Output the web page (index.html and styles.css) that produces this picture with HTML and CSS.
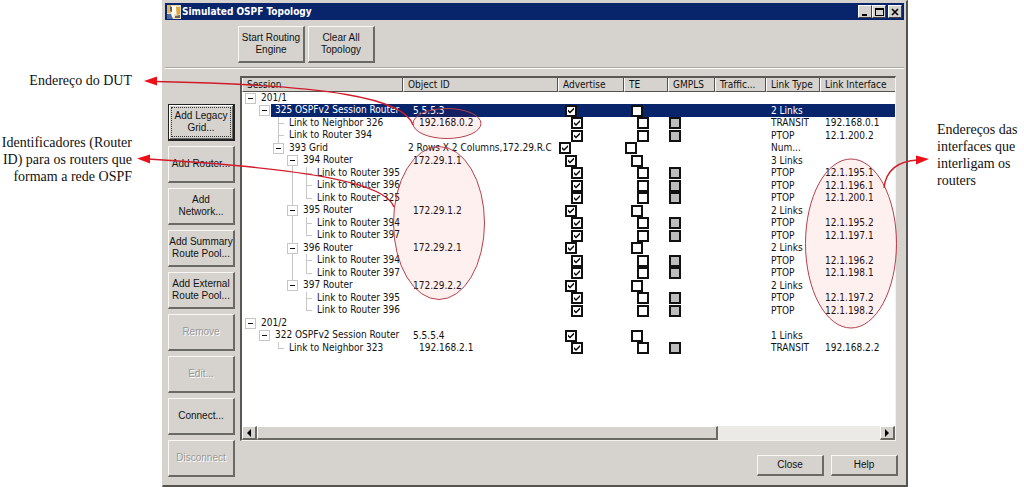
FILE: index.html
```html
<!DOCTYPE html>
<html lang="pt">
<head>
<meta charset="utf-8">
<title>Simulated OSPF Topology</title>
<link rel="stylesheet" href="styles.css">
</head>
<body>
<main class="figure">
  <aside class="notes notes-left">
    <p>Endereço do DUT</p>
    <p>Identificadores (Router<br>ID) para os routers que<br>formam a rede OSPF</p>
  </aside>

  <section class="window">
    <header class="titlebar">
      <svg class="app-icon" viewBox="0 0 14 14" aria-hidden="true">
        <rect width="14" height="14" fill="#e9dcc0"/>
        <path d="M0 0h4v8H0z" fill="#e0b86a"/><path d="M0 9h4l2 5H0z" fill="#4c6f9f"/>
        <path d="M4 1h5v8H7v3H5z" fill="#fffdf4"/><path d="M9 2h4v7l-3 1z" fill="#e3a62f"/>
        <path d="M3 1l2 1v5L3 6zM8 11l5-1v3H8z" fill="#6d6350"/>
      </svg>
      <h1>Simulated OSPF Topology</h1>
      <button class="caption" aria-label="Minimize"><svg viewBox="0 0 9 8"><path d="M1 6h5v2H1z"/></svg></button>
      <button class="caption" aria-label="Maximize"><svg viewBox="0 0 9 8"><path d="M0 0h9v8H0zM1 2v5h7V2z" fill-rule="evenodd"/></svg></button>
      <button class="caption caption-close" aria-label="Close window"><svg viewBox="0 0 9 8"><path d="M1 1l6 6M7 1L1 7" stroke="#000" stroke-width="1.6"/></svg></button>
    </header>

    <div class="toolbar">
      <button class="btn tall">Start Routing<br>Engine</button>
      <button class="btn tall">Clear All<br>Topology</button>
    </div>

    <div class="content">
      <nav class="actions">
        <button class="btn tall focused"><span>Add Legacy<br>Grid...</span></button>
        <button class="btn tall">Add Router...</button>
        <button class="btn tall">Add<br>Network...</button>
        <button class="btn tall">Add Summary<br>Route Pool...</button>
        <button class="btn tall">Add External<br>Route Pool...</button>
        <button class="btn tall" disabled>Remove</button>
        <button class="btn tall" disabled>Edit...</button>
        <button class="btn tall">Connect...</button>
        <button class="btn tall" disabled>Disconnect</button>
      </nav>

      <div class="pane">
        <div class="list">
          <table>
            <colgroup><col class="c-session"><col class="c-object"><col class="c-adv"><col class="c-te"><col class="c-gmpls"><col class="c-traffic"><col class="c-type"><col></colgroup>
            <thead><tr><th>Session</th><th>Object ID</th><th>Advertise</th><th>TE</th><th>GMPLS</th><th>Traffic...</th><th>Link Type</th><th>Link Interface</th></tr></thead>
            <tbody>
              <tr><td><div class="node"><button class="toggle" aria-label="Collapse 201/1"></button><b>201/1</b></div></td><td></td><td></td><td></td><td></td><td></td><td></td><td></td></tr>
              <tr class="router selected"><td><div class="node"><i></i><button class="toggle" aria-label="Collapse 325"></button><b>325 OSPFv2 Session Router</b></div></td><td>5.5.5.3</td><td><input type="checkbox" aria-label="Advertise" checked></td><td><input type="checkbox" aria-label="TE"></td><td></td><td></td><td>2 Links</td><td></td></tr>
              <tr class="link"><td><div class="node"><i></i><i></i><i class="tee"></i><b>Link to Neighbor 326</b></div></td><td>192.168.0.2</td><td><input type="checkbox" aria-label="Advertise" checked></td><td><input type="checkbox" aria-label="TE"></td><td><input type="checkbox" aria-label="GMPLS" disabled></td><td></td><td>TRANSIT</td><td>192.168.0.1</td></tr>
              <tr class="link"><td><div class="node"><i></i><i></i><i class="tee"></i><b>Link to Router 394</b></div></td><td></td><td><input type="checkbox" aria-label="Advertise" checked></td><td><input type="checkbox" aria-label="TE"></td><td><input type="checkbox" aria-label="GMPLS" disabled></td><td></td><td>PTOP</td><td>12.1.200.2</td></tr>
              <tr class="grid"><td><div class="node"><i></i><i></i><button class="toggle up" aria-label="Collapse 393"></button><b>393 Grid</b></div></td><td>2 Rows X 2 Columns,172.29.R.C</td><td><input type="checkbox" aria-label="Advertise" checked></td><td><input type="checkbox" aria-label="TE"></td><td></td><td></td><td>Num...</td><td></td></tr>
              <tr class="router"><td><div class="node"><i></i><i></i><i></i><button class="toggle down" aria-label="Collapse 394"></button><b>394 Router</b></div></td><td>172.29.1.1</td><td><input type="checkbox" aria-label="Advertise" checked></td><td><input type="checkbox" aria-label="TE"></td><td></td><td></td><td>3 Links</td><td></td></tr>
              <tr class="link"><td><div class="node"><i></i><i></i><i></i><i class="line"></i><i class="tee"></i><b>Link to Router 395</b></div></td><td></td><td><input type="checkbox" aria-label="Advertise" checked></td><td><input type="checkbox" aria-label="TE"></td><td><input type="checkbox" aria-label="GMPLS" disabled></td><td></td><td>PTOP</td><td>12.1.195.1</td></tr>
              <tr class="link"><td><div class="node"><i></i><i></i><i></i><i class="line"></i><i class="tee"></i><b>Link to Router 396</b></div></td><td></td><td><input type="checkbox" aria-label="Advertise" checked></td><td><input type="checkbox" aria-label="TE"></td><td><input type="checkbox" aria-label="GMPLS" disabled></td><td></td><td>PTOP</td><td>12.1.196.1</td></tr>
              <tr class="link"><td><div class="node"><i></i><i></i><i></i><i class="line"></i><i class="tee end"></i><b>Link to Router 325</b></div></td><td></td><td><input type="checkbox" aria-label="Advertise" checked></td><td><input type="checkbox" aria-label="TE"></td><td><input type="checkbox" aria-label="GMPLS" disabled></td><td></td><td>PTOP</td><td>12.1.200.1</td></tr>
              <tr class="router"><td><div class="node"><i></i><i></i><i></i><button class="toggle up down" aria-label="Collapse 395"></button><b>395 Router</b></div></td><td>172.29.1.2</td><td><input type="checkbox" aria-label="Advertise" checked></td><td><input type="checkbox" aria-label="TE"></td><td></td><td></td><td>2 Links</td><td></td></tr>
              <tr class="link"><td><div class="node"><i></i><i></i><i></i><i class="line"></i><i class="tee"></i><b>Link to Router 394</b></div></td><td></td><td><input type="checkbox" aria-label="Advertise" checked></td><td><input type="checkbox" aria-label="TE"></td><td><input type="checkbox" aria-label="GMPLS" disabled></td><td></td><td>PTOP</td><td>12.1.195.2</td></tr>
              <tr class="link"><td><div class="node"><i></i><i></i><i></i><i class="line"></i><i class="tee end"></i><b>Link to Router 397</b></div></td><td></td><td><input type="checkbox" aria-label="Advertise" checked></td><td><input type="checkbox" aria-label="TE"></td><td><input type="checkbox" aria-label="GMPLS" disabled></td><td></td><td>PTOP</td><td>12.1.197.1</td></tr>
              <tr class="router"><td><div class="node"><i></i><i></i><i></i><button class="toggle up down" aria-label="Collapse 396"></button><b>396 Router</b></div></td><td>172.29.2.1</td><td><input type="checkbox" aria-label="Advertise" checked></td><td><input type="checkbox" aria-label="TE"></td><td></td><td></td><td>2 Links</td><td></td></tr>
              <tr class="link"><td><div class="node"><i></i><i></i><i></i><i class="line"></i><i class="tee"></i><b>Link to Router 394</b></div></td><td></td><td><input type="checkbox" aria-label="Advertise" checked></td><td><input type="checkbox" aria-label="TE"></td><td><input type="checkbox" aria-label="GMPLS" disabled></td><td></td><td>PTOP</td><td>12.1.196.2</td></tr>
              <tr class="link"><td><div class="node"><i></i><i></i><i></i><i class="line"></i><i class="tee end"></i><b>Link to Router 397</b></div></td><td></td><td><input type="checkbox" aria-label="Advertise" checked></td><td><input type="checkbox" aria-label="TE"></td><td><input type="checkbox" aria-label="GMPLS" disabled></td><td></td><td>PTOP</td><td>12.1.198.1</td></tr>
              <tr class="router"><td><div class="node"><i></i><i></i><i></i><button class="toggle up" aria-label="Collapse 397"></button><b>397 Router</b></div></td><td>172.29.2.2</td><td><input type="checkbox" aria-label="Advertise" checked></td><td><input type="checkbox" aria-label="TE"></td><td></td><td></td><td>2 Links</td><td></td></tr>
              <tr class="link"><td><div class="node"><i></i><i></i><i></i><i></i><i class="tee"></i><b>Link to Router 395</b></div></td><td></td><td><input type="checkbox" aria-label="Advertise" checked></td><td><input type="checkbox" aria-label="TE"></td><td><input type="checkbox" aria-label="GMPLS" disabled></td><td></td><td>PTOP</td><td>12.1.197.2</td></tr>
              <tr class="link"><td><div class="node"><i></i><i></i><i></i><i></i><i class="tee end"></i><b>Link to Router 396</b></div></td><td></td><td><input type="checkbox" aria-label="Advertise" checked></td><td><input type="checkbox" aria-label="TE"></td><td><input type="checkbox" aria-label="GMPLS" disabled></td><td></td><td>PTOP</td><td>12.1.198.2</td></tr>
              <tr><td><div class="node"><button class="toggle" aria-label="Collapse 201/2"></button><b>201/2</b></div></td><td></td><td></td><td></td><td></td><td></td><td></td><td></td></tr>
              <tr class="router"><td><div class="node"><i></i><button class="toggle" aria-label="Collapse 322"></button><b>322 OSPFv2 Session Router</b></div></td><td>5.5.5.4</td><td><input type="checkbox" aria-label="Advertise" checked></td><td><input type="checkbox" aria-label="TE"></td><td></td><td></td><td>1 Links</td><td></td></tr>
              <tr class="link"><td><div class="node"><i></i><i></i><i class="tee end"></i><b>Link to Neighbor 323</b></div></td><td>192.168.2.1</td><td><input type="checkbox" aria-label="Advertise" checked></td><td><input type="checkbox" aria-label="TE"></td><td><input type="checkbox" aria-label="GMPLS" disabled></td><td></td><td>TRANSIT</td><td>192.168.2.2</td></tr>
            </tbody>
          </table>
          <div class="scrollbar">
            <button aria-label="Scroll left"><svg viewBox="0 0 4 8"><path d="M4 0v8L0 4z"/></svg></button>
            <div class="track"><div class="thumb"></div></div>
            <button aria-label="Scroll right"><svg viewBox="0 0 4 8"><path d="M0 0v8l4-4z"/></svg></button>
          </div>
        </div>
        <footer class="dialog-buttons">
          <button class="btn">Close</button>
          <button class="btn">Help</button>
        </footer>
      </div>
    </div>
  </section>

  <aside class="notes notes-right">
    <p>Endereços das<br>interfaces que<br>interligam os<br>routers</p>
  </aside>

  <svg class="callouts callouts-left" viewBox="0 0 520 487" aria-hidden="true">
    <ellipse cx="447" cy="123.5" rx="34" ry="15"/>
    <ellipse cx="439" cy="223" rx="45.5" ry="76.5"/>
    <path class="arrow" d="M413 125C404 98 330 85 156 81.500M394 207C386 184 315 169 148 159"/>
    <path class="head" d="M144 81l13-4.500v9zM137 158.500l13-4v9z"/>
  </svg>
  <svg class="callouts callouts-right" viewBox="764 0 260 487" aria-hidden="true">
    <ellipse cx="851" cy="243.5" rx="45.5" ry="84.5"/>
    <path class="arrow" d="M884 188C886 170 898 161 918 160"/>
    <path class="head" d="M929 159l-13-3.500v9z"/>
  </svg>
</main>
</body>
</html>
```
FILE: styles.css
```css
* { box-sizing: border-box; }

:root {
  --face: #d6d3ce;
  --navy: #08246b;
  --dark: #6b6963;
  --guide: #c6c6c6;
}

body {
  margin: 0;
  background: #fff;
  color: #111;
  font-family: "DejaVu Sans Condensed", "DejaVu Sans", sans-serif;
  font-size: 10px;
}

button, input { margin: 0; padding: 0; font: inherit; color: inherit; }

.figure { position: relative; display: flex; align-items: flex-start; }

/* Annotations beside the window */
.notes {
  flex: none;
  font: 14px/17px "Liberation Serif", serif;
  white-space: nowrap;
}
.notes p { margin: 0; }
.notes-left {
  display: flex;
  flex-direction: column;
  align-items: flex-end;
  gap: 45px;
  width: 162px;
  padding: 72px 30px 0 0;
  text-align: right;
}
.notes-right { width: 116px; padding: 121px 0 0 29px; }

/* Window frame */
.window {
  flex: 1;
  min-width: 0;
  padding: 2px;
  background: var(--face);
  border: 1px solid var(--face);
  border-right: 2px solid #55534f;
  border-bottom: 2px solid #55534f;
}
.titlebar {
  display: flex;
  align-items: center;
  height: 17px;
  padding: 0 2px;
  background: var(--navy);
  color: #fff;
}
.titlebar h1 {
  flex: 1;
  margin: 0 0 0 1px;
  font-size: 10px;
  line-height: 16px;
  font-weight: bold;
}
.app-icon { width: 14px; height: 14px; }
.caption {
  display: grid;
  place-items: center;
  width: 14px;
  height: 13px;
  background: var(--face);
  border: 1px solid #fff;
  border-right-color: #444;
  border-bottom-color: #444;
}
.caption svg { width: 9px; height: 8px; }
.caption-close { margin-left: 2px; }

.btn {
  width: 67px;
  height: 21px;
  background: var(--face);
  border: 1px solid #f8f7f4;
  border-right: 2px solid var(--dark);
  border-bottom: 2px solid var(--dark);
  font: 10px/12px "Liberation Sans", sans-serif;
  white-space: nowrap;
  text-align: center;
}
.btn.tall { height: 37px; }
.btn:disabled { color: #9a9892; text-shadow: 1px 1px 0 #fff; }
.btn.focused {
  padding: 1px;
  border: 1px solid #222;
  border-right-width: 2px;
  border-bottom-width: 2px;
  box-shadow: inset 1px 1px 0 #fff, inset -1px -1px 0 var(--dark);
}
.btn.focused span {
  display: grid;
  place-content: center;
  height: 30px;
  margin: 0 1px;
  border: 1px dotted #333;
}

.toolbar {
  display: flex;
  gap: 3px;
  padding: 6px 0 4px 73px;
  border-bottom: 1px solid #aaa7a0;
  box-shadow: 0 1px 0 #fff;
}

.content { display: flex; gap: 5px; padding: 8px 6px 6px 3px; }
.actions { display: flex; flex-direction: column; gap: 5px; padding-top: 28px; }
.pane { flex: 1; min-width: 0; }

/* Topology list */
.list {
  margin-right: 2px;
  background: #fff;
  border: 2px solid #5a5854;
  border-right: 1px solid #f4f3f0;
  border-bottom: 1px solid #f4f3f0;
}
table { width: 100%; table-layout: fixed; border-spacing: 0; }
.c-session { width: 161px; }
.c-object { width: 155px; }
.c-adv { width: 66px; }
.c-te { width: 44px; }
.c-gmpls { width: 47px; }
.c-traffic { width: 51px; }
.c-type { width: 54px; }

th {
  height: 14px;
  padding: 0 0 0 4px;
  background: var(--face);
  border-left: 1px solid #fff;
  border-right: 1px solid #55534f;
  border-bottom: 1px solid #55534f;
  font-weight: normal;
  line-height: 13px;
  text-align: left;
  white-space: nowrap;
}
th:last-child { border-right: 0; }

td { height: 12px; padding: 0 0 0 5px; line-height: 12px; white-space: nowrap; }
tr:nth-child(even) td { height: 13px; }
td:first-child { padding: 0 0 0 1px; }
td:nth-child(n+3):nth-child(-n+5) { padding: 0 0 0 1px; }
.router td:nth-child(2) { padding-left: 10px; }
.link td:nth-child(2) { padding-left: 16px; }
.router td:nth-child(3), .router td:nth-child(4) { padding-left: 7px; }
.link td:nth-child(3), .link td:nth-child(4) { padding-left: 13px; }
.selected td:nth-child(n+2), .selected b { background: var(--navy); color: #fff; }

.node { display: flex; height: 12px; }
tr:nth-child(even) .node { height: 13px; }
.node b { flex: 1; padding-left: 4px; font-weight: normal; }
.node i, .toggle { flex: none; width: 14px; }
.line, .tee { background: linear-gradient(var(--guide), var(--guide)) 7px 0 / 1px 100% no-repeat; }
.tee.end { background-size: 1px 6px; }
.tee::after {
  content: "";
  display: block;
  width: 6px;
  height: 6px;
  margin-left: 7px;
  border-bottom: 1px solid var(--guide);
}
.toggle { background: none; border: 0; }
.toggle.up { background: linear-gradient(var(--guide), var(--guide)) 7px 0 / 1px 2px no-repeat; }
.toggle.down { background: linear-gradient(var(--guide), var(--guide)) 7px 100% / 1px 2px no-repeat; }
.toggle.up.down { background: linear-gradient(var(--guide), var(--guide)) 7px 0 / 1px 100% no-repeat; }
.toggle::before {
  content: "";
  display: block;
  width: 9px;
  height: 9px;
  margin: 0 auto;
  border: 1px solid var(--guide);
  background: linear-gradient(#111, #111) center / 5px 1px no-repeat #fff;
}

input[type="checkbox"] {
  appearance: none;
  display: block;
  width: 12px;
  height: 12px;
  background: #fff;
  border: 2px solid #111;
}
input[type="checkbox"]:checked::before {
  content: "";
  display: block;
  width: 8px;
  height: 8px;
  background: #000;
  clip-path: polygon(1px 3px, 3px 5px, 7px 1px, 7px 3px, 3px 7px, 1px 5px);
}
input[type="checkbox"]:disabled { background: #bdbdbd; }

.scrollbar { display: flex; height: 14px; margin-top: 72px; background: #ebeae7; }
.scrollbar button {
  display: grid;
  place-items: center;
  width: 15px;
  background: var(--face);
  border: 1px solid #fff;
  border-right: 2px solid var(--dark);
  border-bottom: 2px solid var(--dark);
}
.scrollbar svg { width: 4px; height: 8px; }
.track { flex: 1; }
.thumb {
  width: 74%;
  height: 14px;
  background: var(--face);
  border: 1px solid #fff;
  border-right: 2px solid var(--dark);
  border-bottom: 2px solid var(--dark);
}

.dialog-buttons {
  display: flex;
  justify-content: flex-end;
  gap: 7px;
  padding-top: 14px;
}

/* Callout shapes drawn over the window */
.callouts { position: absolute; top: 0; height: 487px; pointer-events: none; }
.callouts-left { left: 0; width: 520px; }
.callouts-right { right: 0; width: 260px; }
.callouts ellipse { fill: #ff0000; fill-opacity: .06; stroke: #b5404c; stroke-width: 1; }
.arrow { fill: none; stroke: #d01c2a; stroke-width: 1.4; }
.head { fill: #ee1018; }
```
